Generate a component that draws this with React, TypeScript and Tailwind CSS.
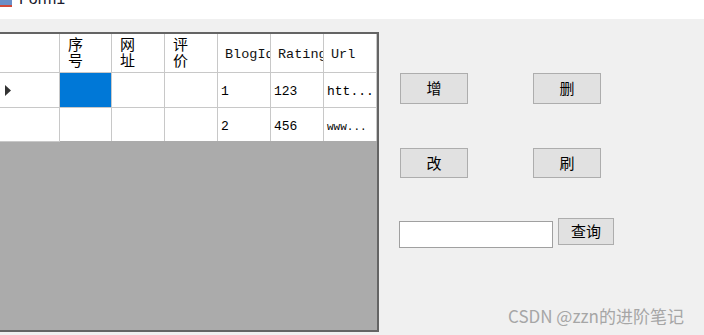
import React from "react";

const cjk = "font-['Noto_Sans_CJK_SC','Noto_Sans',sans-serif]";
const mono = "font-['Liberation_Mono','Noto_Sans_CJK_SC',monospace]";

const cols = ["w-[52px]", "w-[53px]", "w-[53px]", "w-[53px]", "w-[53px]", "w-[53px]"];

const HeaderCell: React.FC<{ w: string; children: React.ReactNode; cn?: boolean }> = ({ w, children, cn }) => (
  <div
    className={`${w} h-full shrink-0 border-r border-[#c8c8c8] bg-white overflow-hidden whitespace-nowrap ${
      cn ? `${cjk} text-[15px] leading-[16px] pl-[8px] pt-[2px] text-black` : `${mono} text-[13.5px] pl-[7px] pt-[11px] text-[#111]`
    }`}
  >
    {children}
  </div>
);

const Cell: React.FC<{ w: string; children?: React.ReactNode; selected?: boolean; small?: boolean }> = ({ w, children, selected, small }) => (
  <div
    className={`${w} h-full shrink-0 border-r border-[#c8c8c8] overflow-hidden whitespace-nowrap pl-[3px] pt-[9px] ${mono} ${
      small ? "text-[11px] pt-[11px]" : "text-[13px]"
    } ${selected ? "bg-[#0078d7]" : "bg-white"} text-black`}
  >
    {children}
  </div>
);

const Btn: React.FC<{ children: React.ReactNode; w?: string; h?: string }> = ({ children, w = "w-[68px]", h = "h-[31px]" }) => (
  <button
    className={`${w} ${h} bg-[#e1e1e1] border border-[#adadad] ${cjk} text-[15px] text-black flex items-center justify-center`}
  >
    {children}
  </button>
);

export default function App() {
  return (
    <div className="w-[704px] h-[335px] overflow-hidden bg-[#f0f0f0] relative">
      {/* title bar, mostly cut off */}
      <div className="h-[19px] bg-white overflow-hidden flex items-start">
        <div className="w-[12px] h-[7px] bg-[#6a8fc8] border-b-2 border-[#d04a3a] shrink-0" />
        <span className="ml-[7px] -mt-[13px] text-[16px] text-[#1a1a2e] font-['Liberation_Sans',sans-serif]">Form1</span>
      </div>

      <div className="flex pt-[13px]">
        {/* DataGridView */}
        <div className="w-[379px] h-[300px] shrink-0 border-t-2 border-r-2 border-b-2 border-[#646464] bg-[#ababab] flex flex-col">
          <div className="h-[39px] flex border-b border-[#c8c8c8] shrink-0">
            <div className="w-[60px] h-full shrink-0 border-r border-[#c8c8c8] bg-white" />
            <HeaderCell w={cols[0]} cn>序<br />号</HeaderCell>
            <HeaderCell w={cols[1]} cn>网<br />址</HeaderCell>
            <HeaderCell w={cols[2]} cn>评<br />价</HeaderCell>
            <HeaderCell w={cols[3]}>BlogId</HeaderCell>
            <HeaderCell w={cols[4]}>Rating</HeaderCell>
            <HeaderCell w={cols[5]}>Url</HeaderCell>
          </div>
          <div className="h-[35px] flex border-b border-[#c8c8c8] shrink-0">
            <div className="w-[60px] h-full shrink-0 border-r border-[#c8c8c8] bg-white flex items-center pl-[5px]">
              <svg width="6" height="11" viewBox="0 0 6 11">
                <path d="M0 0 L6 5.5 L0 11 Z" fill="#333" />
              </svg>
            </div>
            <Cell w={cols[0]} selected />
            <Cell w={cols[1]} />
            <Cell w={cols[2]} />
            <Cell w={cols[3]}>1</Cell>
            <Cell w={cols[4]}>123</Cell>
            <Cell w={cols[5]}>htt...</Cell>
          </div>
          <div className="h-[33px] flex shrink-0">
            <div className="w-[60px] h-[34px] shrink-0 border-r border-b border-[#c8c8c8] bg-white" />
            <Cell w={cols[0]} />
            <Cell w={cols[1]} />
            <Cell w={cols[2]} />
            <Cell w={cols[3]}>2</Cell>
            <Cell w={cols[4]}>456</Cell>
            <Cell w={cols[5]} small>www...</Cell>
          </div>
        </div>

        {/* controls */}
        <div className="pl-[21px] pt-[41px] flex flex-col">
          <div className="flex gap-[65px]">
            <Btn>增</Btn>
            <Btn>删</Btn>
          </div>
          <div className="flex gap-[65px] mt-[44px]">
            <Btn h="h-[30px]">改</Btn>
            <Btn h="h-[30px]">刷</Btn>
          </div>
          <div className="flex items-start gap-[5px] mt-[40px]">
            <input className="w-[154px] h-[27px] mt-[3px] ml-[-1px] bg-white border border-[#a0a0a0] outline-none" />
            <Btn w="w-[56px]" h="h-[27px]">查询</Btn>
          </div>
        </div>
      </div>

      <div className={`absolute left-[508px] top-[303px] text-[17px] text-[#a6a6a6] ${cjk}`}>CSDN @zzn的进阶笔记</div>
    </div>
  );
}
